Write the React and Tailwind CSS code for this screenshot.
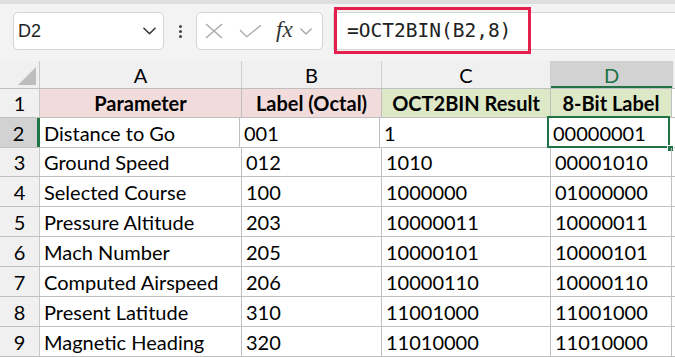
import React from "react";

const rows = [
  ["Distance to Go", "001", "1", "00000001"],
  ["Ground Speed", "012", "1010", "00001010"],
  ["Selected Course", "100", "1000000", "01000000"],
  ["Pressure Altitude", "203", "10000011", "10000011"],
  ["Mach Number", "205", "10000101", "10000101"],
  ["Computed Airspeed", "206", "10000110", "10000110"],
  ["Present Latitude", "310", "11001000", "11001000"],
  ["Magnetic Heading", "320", "11010000", "11010000"],
];
const heights = ["h-[30px]", "h-[29px]", "h-[30px]", "h-[30px]", "h-[30px]", "h-[30px]", "h-[30px]", "h-[30px]"];

const cellFont = "font-['Lato',sans-serif] text-[20px] text-black";

function Chevron({ className }) {
  return (
    <svg viewBox="0 0 14 8" className={className} fill="none" strokeWidth="1.6" strokeLinecap="round" strokeLinejoin="round">
      <path d="M1 1 L7 7 L13 1" />
    </svg>
  );
}

export default function App() {
  return (
    <div className="w-[675px] h-[357px] overflow-hidden bg-[#f3f3f3] relative">
      {/* top band */}
      <div className="h-[4px] bg-[#dedede]" />
      {/* toolbar */}
      <div className="h-[57px] flex items-start pt-[8px]">
        <div className="ml-[13px] w-[151px] h-[38px] bg-white border border-[#d4d4d4] rounded-[5px] flex items-center pl-[4px] pr-[7px]">
          <span className="font-['Liberation_Sans',sans-serif] text-[18px] text-[#222] flex-1">D2</span>
          <Chevron className="w-[13px] h-[8px] stroke-[#333]" />
        </div>
        <div className="w-[32px] h-[38px] flex flex-col items-center justify-center gap-[2px]">
          <div className="w-[3px] h-[3px] rounded-full bg-[#444]" />
          <div className="w-[3px] h-[3px] rounded-full bg-[#444]" />
          <div className="w-[3px] h-[3px] rounded-full bg-[#444]" />
        </div>
        <div className="w-[127px] h-[38px] bg-white border border-[#d4d4d4] rounded-[5px] flex items-center pl-[8px]">
          <svg viewBox="0 0 18 16" className="w-[18px] h-[16px]" stroke="#a6a6a6" strokeWidth="1.3" fill="none">
            <path d="M1 1 L17 15 M17 1 L1 15" />
          </svg>
          <svg viewBox="0 0 24 14" className="ml-[16px] w-[23px] h-[14px]" stroke="#a6a6a6" strokeWidth="1.3" fill="none">
            <path d="M1 6 L8 13 L23 1" />
          </svg>
          <span className="ml-[14px] font-['Liberation_Serif',serif] italic text-[23px] leading-none text-[#333] pb-[3px]">fx</span>
          <Chevron className="ml-[7px] w-[12px] h-[7px] stroke-[#a6a6a6]" />
        </div>
        <div className="ml-[10px] flex-1 h-[38px] bg-white border-y border-l border-[#d4d4d4] relative flex items-center pl-[13px]">
          <span className="font-['DejaVu_Sans_Mono',monospace] text-[19.5px] text-[#222]">=OCT2BIN(B2,8)</span>
          <div className="absolute left-[0px] top-[-6px] w-[197px] h-[47px] border-[3px] border-[#e3204d]" />
        </div>
      </div>

      {/* grid */}
      <div className="bg-white">
        {/* column header row */}
        <div className="flex h-[28px] bg-[#f0f0f0] border-b border-[#bfbfbf]">
          <div className="w-[40px] h-full border-r border-[#c8c8c8] relative">
            <div className="absolute right-[3px] bottom-[3px] w-0 h-0 border-l-[18px] border-l-transparent border-b-[18px] border-b-[#bdbdbd]" />
          </div>
          {[
            ["A", "w-[202px]"],
            ["B", "w-[140px]"],
            ["C", "w-[169px]"],
          ].map(([l, w]) => (
            <div key={l} className={`${w} h-full border-r border-[#d0d0d0] flex items-center justify-center ${cellFont} text-[#222]`}>
              {l}
            </div>
          ))}
          <div className="w-[121px] h-full bg-[#d2d2d2] border-b-2 border-[#217346] flex items-center justify-center font-['Lato',sans-serif] text-[20px] text-[#217346] pt-[2px]">
            D
          </div>
          <div className="flex-1 h-full border-l border-[#d0d0d0]" />
        </div>

        {/* row 1 header */}
        <div className="flex h-[29px] border-b border-[#bfbfbf]">
          <div className={`w-[40px] h-full bg-[#f0f0f0] border-r border-[#c8c8c8] flex items-center justify-center ${cellFont} text-[#222]`}>1</div>
          <div className={`w-[202px] h-full bg-[#f2dcdb] border-r border-[#bfbfbf] flex items-center justify-center ${cellFont} font-bold`}>Parameter</div>
          <div className={`w-[140px] h-full bg-[#f2dcdb] border-r border-[#bfbfbf] flex items-center justify-center ${cellFont} font-bold`}>Label (Octal)</div>
          <div className={`w-[169px] h-full bg-[#dde8c7] border-r border-[#bfbfbf] flex items-center justify-center ${cellFont} font-bold`}>OCT2BIN Result</div>
          <div className={`w-[121px] h-full bg-[#dde8c7] border-r border-[#bfbfbf] flex items-center justify-center ${cellFont} font-bold`}>8-Bit Label</div>
          <div className="flex-1 h-full" />
        </div>

        {rows.map((r, i) => {
          const sel = i === 0;
          return (
            <div key={i} className={`flex ${heights[i]} border-b border-[#bfbfbf]`}>
              <div
                className={`w-[40px] h-full flex items-center justify-center ${cellFont} ${
                  sel ? "bg-[#d2d2d2] text-[#217346] border-r-[3px] border-[#217346]" : "bg-[#f0f0f0] text-[#222] border-r border-[#c8c8c8]"
                }`}
              >
                {i + 2}
              </div>
              <div className={`w-[202px] h-full border-r border-[#bfbfbf] flex items-center pl-[4px] ${cellFont} ${sel ? "-ml-[2px] pl-[6px]" : ""}`}>{r[0]}</div>
              <div className={`w-[140px] h-full border-r border-[#bfbfbf] flex items-center pl-[4px] ${cellFont}`}>{r[1]}</div>
              <div className={`w-[169px] h-full border-r border-[#bfbfbf] flex items-center pl-[4px] ${cellFont}`}>{r[2]}</div>
              <div className={`w-[121px] h-full border-r border-[#bfbfbf] flex items-center pl-[4px] ${cellFont} relative`}>
                {r[3]}
                {sel && (
                  <>
                    <div className="absolute left-[-2px] top-[-2px] right-[-1px] bottom-[-1px] border-2 border-[#217346]" />
                    <div className="absolute right-[-5px] bottom-[-5px] w-[7px] h-[7px] bg-[#217346] border border-white" />
                  </>
                )}
              </div>
              <div className="flex-1 h-full" />
            </div>
          );
        })}
      </div>
    </div>
  );
}
